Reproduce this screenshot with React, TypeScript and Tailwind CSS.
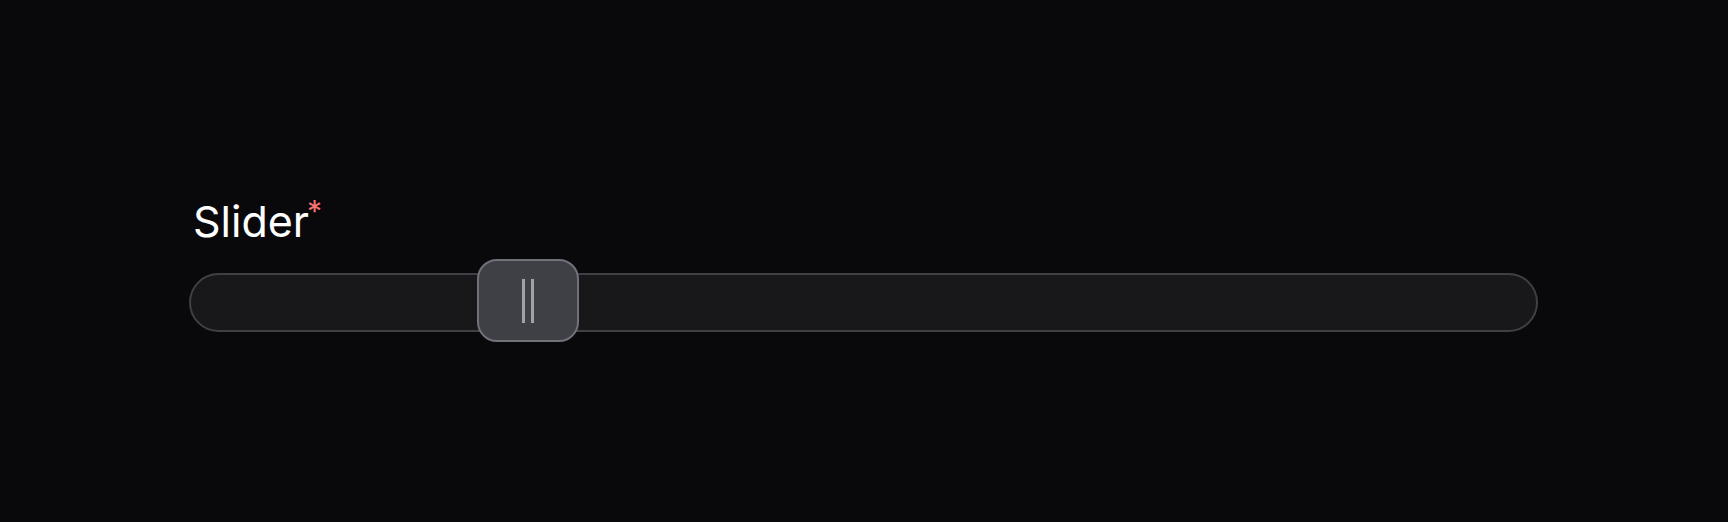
import React, { useState } from 'react';

const App: React.FC = () => {
  const [value] = useState<number>(288);

  return (
    <div className="min-h-screen w-full bg-[#09090b] font-['Inter','Noto_Sans',sans-serif]">
      <div className="pl-[189px] pt-[197px]">
        <label className="flex items-start text-[43px] leading-[48px] text-white pl-[4px]">
          Slider
          <span className="text-[30px] leading-[30px] text-[#f87171] ml-[-2px] mt-[-1px]">*</span>
        </label>

        <div className="relative mt-[28px] w-[1349px] h-[59px] rounded-full border-2 border-[#3f3f46] bg-[#18181b]">
          <div
            className="absolute top-[-16px] w-[102px] h-[83px] rounded-[20px] border-2 border-[#71717a] bg-[#3f3f46] flex items-center justify-center gap-[6px]"
            style={{ left: value - 2 }}
          >
            <div className="w-[3px] h-[44px] bg-[#a1a1aa]" />
            <div className="w-[3px] h-[44px] bg-[#a1a1aa]" />
          </div>
        </div>
      </div>
    </div>
  );
};

export default App;
